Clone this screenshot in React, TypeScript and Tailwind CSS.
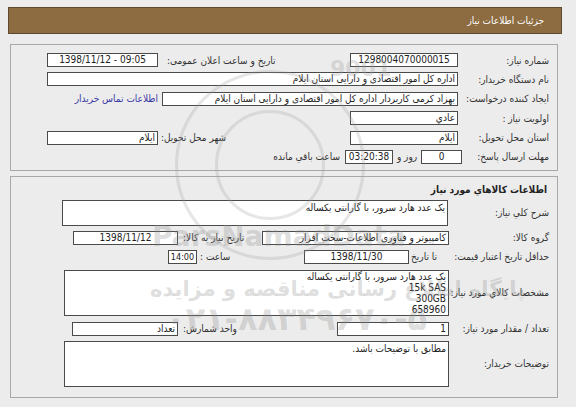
import type { ReactNode } from "react";

function Box({ className, children }: { className: string; children?: ReactNode }) {
  return (
    <div
      className={`h-[14px] shrink-0 overflow-hidden whitespace-nowrap border border-[#4a4a4a] bg-white px-[2px] leading-[12px] text-[#222] ${className}`}
    >
      {children}
    </div>
  );
}

function Label({ className, children }: { className: string; children: ReactNode }) {
  return <div className={`shrink-0 whitespace-nowrap text-[#333] ${className}`}>{children}</div>;
}

export default function App() {
  return (
    <div className="relative h-[407px] w-[576px] overflow-hidden bg-[#ececec] pt-[7px] font-['DejaVu_Sans_Condensed','DejaVu_Sans',sans-serif] text-[10px]">
      {/* header */}
      <div
        dir="rtl"
        className="ml-[8px] flex h-[27px] w-[554px] items-center border border-[#5e4a31] bg-[#8c6c40] pr-[17px] text-white"
      >
        جزئیات اطلاعات نیاز
      </div>

      {/* panel 1 */}
      <div
        dir="rtl"
        className="ml-[10px] mt-[10px] flex w-[548px] flex-col gap-[5.4px] border border-[#a8a8a8] pb-[6px] pr-[8px] pt-[8px]"
      >
        <div className="flex h-[14px] items-center">
          <Label className="w-[91px]">شماره نیاز:</Label>
          <Box className="w-[108px] text-center">1298004070000015</Box>
          <Label className="w-[192px] pl-[9px] text-left">تاریخ و ساعت اعلان عمومی:</Label>
          <div dir="ltr" className="h-[14px] w-[111px] shrink-0 overflow-hidden whitespace-nowrap border border-[#4a4a4a] bg-white text-center leading-[12px] text-[#222]">
            1398/11/12 - 09:05
          </div>
        </div>
        <div className="flex h-[14px] items-center">
          <Label className="w-[91px]">نام دستگاه خریدار:</Label>
          <Box className="w-[411px] text-right">اداره کل امور اقتصادی و دارایی استان ایلام</Box>
        </div>
        <div className="flex h-[14px] items-center">
          <Label className="w-[91px]">ایجاد کننده درخواست:</Label>
          <Box className="w-[296px] text-right">بهزاد کرمی کاربردار اداره کل امور اقتصادی و دارایی استان ایلام</Box>
          <span className="mr-[4px] whitespace-nowrap text-[#3a3aa6]">اطلاعات تماس خریدار</span>
        </div>
        <div className="flex h-[14px] items-center">
          <Label className="w-[91px]">اولویت نیاز :</Label>
          <Box className="w-[108px] text-right">عادي</Box>
        </div>
        <div className="flex h-[14px] items-center">
          <Label className="w-[91px]">استان محل تحویل:</Label>
          <Box className="w-[108px] text-right">ایلام</Box>
          <Label className="w-[192px] pl-[3px] text-left">شهر محل تحویل:</Label>
          <Box className="w-[111px] text-right">ایلام</Box>
        </div>
        <div className="flex h-[14px] items-center">
          <Label className="w-[87px]">مهلت ارسال پاسخ:</Label>
          <Box className="w-[41px] text-center">0</Box>
          <Label className="w-[28px] text-center">روز و</Label>
          <Box className="w-[48px] text-center">03:20:38</Box>
          <Label className="mr-[5px]">ساعت باقي مانده</Label>
        </div>
      </div>

      {/* panel 2 */}
      <div
        dir="rtl"
        className="ml-[10px] mt-[5px] flex w-[548px] flex-col border border-[#a8a8a8] pb-[10px] pr-[8px] pt-[6px]"
      >
        <div className="h-[13px] pr-[2px] font-bold leading-[13px] text-[#222]">اطلاعات کالاهاي مورد نياز</div>

        <div className="mt-[4px] flex h-[26px] items-center">
          <Label className="w-[101px]">شرح کلي نياز:</Label>
          <div className="h-[26px] w-[386px] border border-[#4a4a4a] bg-white px-[2px] leading-[13px] text-[#222]">
            یک عدد هارد سرور، با گارانتی یکساله
          </div>
        </div>

        <div className="mt-[5px] flex h-[14px] items-center">
          <Label className="w-[100px]">گروه کالا:</Label>
          <Box className="w-[187px] text-right">کامپیوتر و فناوری اطلاعات-سخت افزار</Box>
          <Label className="w-[84px] pl-[5px] text-left">تاریخ نیاز به کالا:</Label>
          <Box className="w-[105px] text-center">1398/11/12</Box>
        </div>

        <div className="mt-[5px] flex h-[14px] items-center">
          <Label className="w-[112px]">حداقل تاریخ اعتبار قیمت:</Label>
          <Label className="w-[28px] pl-[2px] text-left">تا تاریخ :</Label>
          <Box className="w-[105px] text-center">1398/11/30</Box>
          <Label className="w-[107px] pl-[3px] text-left">ساعت :</Label>
          <div dir="ltr" className="h-[14px] w-[29px] shrink-0 whitespace-nowrap border border-[#4a4a4a] bg-white text-center text-[9px] leading-[12px] text-[#222]">
            14:00
          </div>
        </div>

        <div className="mt-[6px] flex h-[46px] items-center">
          <Label className="w-[100px]">مشخصات کالاي مورد نياز:</Label>
          <div className="h-[46px] w-[385px] border border-[#4a4a4a] bg-white px-[2px] leading-[11px] text-[#222]">
            <div>یک عدد هارد سرور، با گارانتی یکساله</div>
            <div>15k SAS</div>
            <div>300GB</div>
            <div>658960</div>
          </div>
        </div>

        <div className="mt-[6px] flex h-[14px] items-center">
          <Label className="w-[100px]">تعداد / مقدار مورد نیاز:</Label>
          <Box className="w-[112px] text-right">1</Box>
          <Label className="w-[159px] pl-[5px] text-left">واحد شمارش:</Label>
          <Box className="w-[106px] text-right">تعداد</Box>
        </div>

        <div className="mt-[5px] flex h-[46px] items-center">
          <Label className="w-[100px]">توضیحات خریدار:</Label>
          <div className="h-[46px] w-[385px] border border-[#4a4a4a] bg-white px-[2px] leading-[13px] text-[#222]">
            مطابق با توضیحات باشد.
          </div>
        </div>
      </div>

      {/* watermark */}
      <div className="pointer-events-none absolute inset-0">
        <div className="absolute left-[175px] top-[70px] h-[190px] w-[190px] rounded-full border-[3px] border-[#9a9a9a]/25" />
        <div className="absolute left-[215px] top-[110px] h-[110px] w-[110px] rounded-full border-[3px] border-[#9a9a9a]/25" />
        <div className="absolute left-[330px] top-[58px] font-['DejaVu_Sans',sans-serif] text-[22px] font-bold leading-[22px] text-[#9a9a9a]/30">
          9001
        </div>
        <div className="absolute left-[152px] top-[222px] font-['DejaVu_Sans',sans-serif] text-[28px] font-bold leading-[30px] text-[#8e8e8e]/30">
          ParsNamadData
        </div>
        <div
          dir="rtl"
          className="absolute left-[150px] top-[276px] whitespace-nowrap font-['DejaVu_Sans',sans-serif] text-[21px] font-bold leading-[26px] text-[#8e8e8e]/30"
        >
          پایگاه اطلاع رسانی مناقصه و مزایده
        </div>
        <div className="absolute left-[166px] top-[302px] whitespace-nowrap font-['DejaVu_Sans',sans-serif] text-[32px] font-bold leading-[34px] text-[#8e8e8e]/30">
          ۰۲۱-۸۸۳۴۹۶۷۰-۵
        </div>
      </div>
    </div>
  );
}
